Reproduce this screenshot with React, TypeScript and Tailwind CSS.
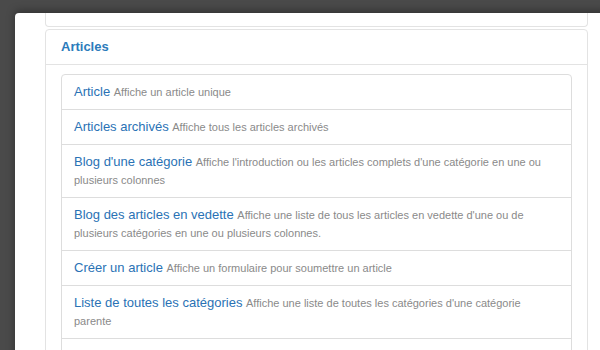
const items = [
  { title: 'Article', desc: 'Affiche un article unique' },
  { title: 'Articles archivés', desc: 'Affiche tous les articles archivés' },
  {
    title: "Blog d'une catégorie",
    desc: "Affiche l'introduction ou les articles complets d'une catégorie en une ou plusieurs colonnes",
  },
  {
    title: 'Blog des articles en vedette',
    desc: "Affiche une liste de tous les articles en vedette d'une ou de plusieurs catégories en une ou plusieurs colonnes.",
  },
  { title: 'Créer un article', desc: 'Affiche un formulaire pour soumettre un article' },
  {
    title: 'Liste de toutes les catégories',
    desc: "Affiche une liste de toutes les catégories d'une catégorie parente",
  },
  { title: "Liste des articles d'une catégorie", desc: "Affiche une liste des articles d'une catégorie" },
];

export default function App() {
  return (
    <div className="h-[350px] w-[600px] overflow-hidden bg-[#4a4a4a] pl-[15px] pt-[13px] font-['Liberation_Sans',Arial,sans-serif]">
      {/* modal */}
      <div className="h-[400px] w-[620px] rounded-tl-[4px] bg-white pl-[30px] shadow-[0_-2px_8px_rgba(0,0,0,0.35)]">
        {/* previous panel (only its bottom is visible) */}
        <div className="h-[14px] w-[543px] rounded-b-[4px] border-x border-b border-[#e3e3e3]" />

        {/* Articles panel */}
        <div className="mt-[2px] w-[543px] rounded-[4px] border border-[#e3e3e3]">
          <div className="flex h-[35px] items-center border-b border-[#e3e3e3] px-[15px]">
            <span className="text-[13px] font-bold text-[#2b7bbb]">Articles</span>
          </div>
          <div className="px-[15px] pt-[9px]">
            <ul className="rounded-[4px] border border-[#dddddd]">
              {items.map((it, i) => (
                <li
                  key={it.title}
                  className={`px-[12px] py-[8px] text-[13px] leading-[18px] ${i > 0 ? 'border-t border-[#dddddd]' : ''}`}
                >
                  <a className="text-[#2a72b5]">{it.title}</a>{' '}
                  <small className="text-[11px] leading-none text-[#8a8a8a]">{it.desc}</small>
                </li>
              ))}
            </ul>
          </div>
        </div>
      </div>
    </div>
  );
}
